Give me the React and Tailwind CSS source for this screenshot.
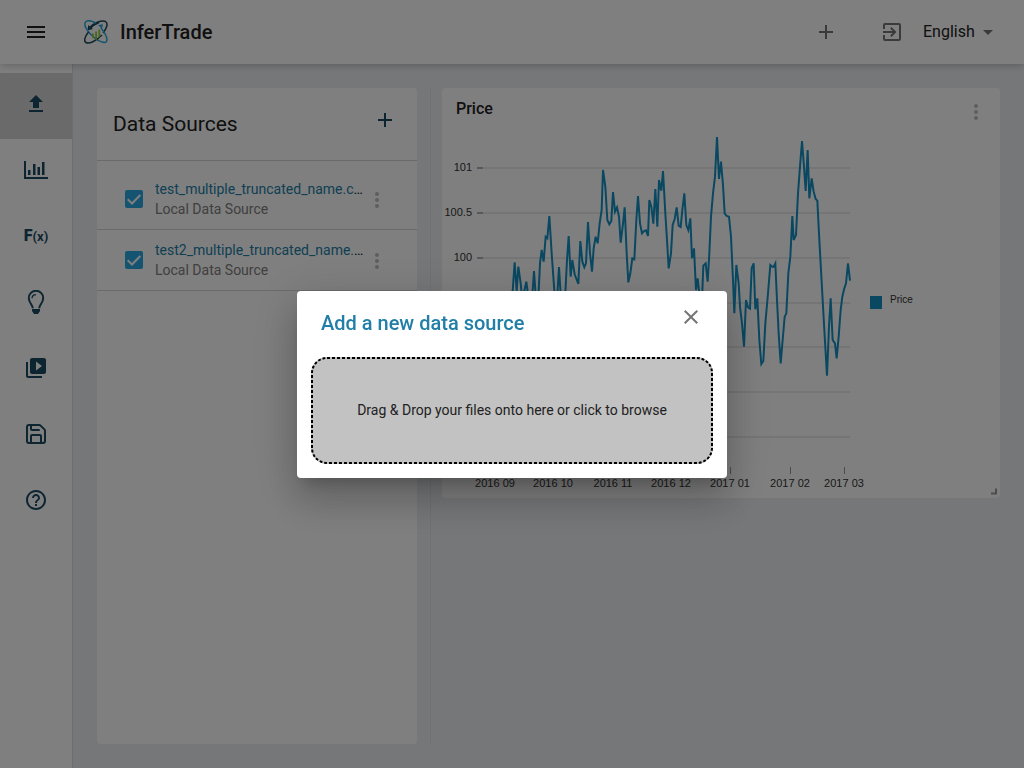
import React from "react";
import {
  MdAdd,
  MdArrowDropDown,
  MdClose,
  MdExitToApp,
  MdFileUpload,
  MdHelpOutline,
  MdMenu,
  MdMoreVert,
  MdVideoLibrary,
} from "react-icons/md";
import { Save } from "lucide-react";

const SOURCES = [
  { id: "source-1", name: "test_multiple_truncated_name.csv", kind: "Local Data Source" },
  { id: "source-2", name: "test2_multiple_truncated_name.csv", kind: "Local Data Source" },
];

const PRICE_LINE =
  "212,560 218,513 224,427 230,513 235,440 242,490 247,540 259,485 266,540 276,540 282,453 288,540 296,513 300,430 305,390 311,425 317,350 322,355 328,288 335,400 340,470 345,540 351,540 357,441 363,540 375,540 381,420 386,348 392,470 397,420 404,463 415,492 421,363 427,425 433,442 438,430 444,306 450,400 456,455 461,385 467,350 473,370 479,310 485,270 489,150 496,200 502,300 508,313 514,303 519,216 525,275 531,262 537,290 542,368 548,320 554,262 560,400 565,487 571,460 577,415 583,418 589,300 594,228 600,310 606,340 612,333 618,331 624,348 628,240 634,260 640,311 646,207 652,320 657,180 664,212 669,153 676,280 681,360 686,445 693,400 698,315 704,297 710,262 716,317 722,321 727,270 733,220 739,315 745,330 751,295 756,415 762,385 768,510 773,475 780,540 786,540 790,437 797,430 803,485 808,400 813,290 819,220 825,170 831,51 837,177 843,125 849,195 854,280 860,288 867,290 873,350 879,480 883,580 889,435 896,490 900,560 906,610 912,680 918,540 924,562 930,566 935,445 941,430 946,568 952,535 958,660 964,732 970,723 976,610 984,520 991,435 997,440 1001,440 1006,430 1011,540 1016,640 1022,730 1028,660 1034,590 1039,580 1045,460 1051,410 1057,288 1061,360 1068,345 1074,220 1080,140 1086,63 1092,140 1097,213 1103,90 1108,235 1115,175 1121,215 1127,237 1132,242 1138,360 1143,450 1148,540 1153,630 1161,767 1167,620 1172,535 1178,660 1185,670 1190,715 1196,650 1202,570 1207,530 1213,505 1218,490 1224,430 1230,482";

const Y_AXIS = [
  { y: 40, label: "101" },
  { y: 85, label: "100.5" },
  { y: 130, label: "100" },
  { y: 175, label: "99.5" },
  { y: 219, label: "99" },
  { y: 264, label: "98.5" },
  { y: 309, label: "98" },
];

const X_AXIS = [
  { x: 53, label: "2016 09" },
  { x: 111, label: "2016 10" },
  { x: 171, label: "2016 11" },
  { x: 229, label: "2016 12" },
  { x: 288, label: "2017 01" },
  { x: 348, label: "2017 02" },
  { x: 402, label: "2017 03" },
];

function Logo() {
  return (
    <svg viewBox="0 0 24 24" className="size-6" fill="none" strokeWidth="1.500" aria-hidden="true">
      <path d="M4 9C9 3 18-.5 21.500 1.500c3 2 1.200 7-2.500 11.500" stroke="#1c4a60" />
      <path d="M15 2.500C11 4 8 6 5.500 9" stroke="#1c4a60" strokeWidth="1.800" />
      <path d="M4 5v5.200l5-1.200z" fill="#1c4a60" />
      <path d="M12 3C7 .5 2.500.2 1.200 2.500-.5 6 4 12.500 10 17.500c5 4 11 6.500 12.600 3.800C24 18.500 21 13 17 8" stroke="#29a9dc" />
      <path d="M14 5l5-.8-1 4.800z" fill="#29a9dc" />
      <path d="M4.500 12C.8 16.500-.3 21 1.800 22.500 5 24.500 12 21 18 15" stroke="#1c4a60" />
      <path d="M8 13.500h1.800v5.200L8 17.200zM11.200 11.500H13v8l-1 .7-.8-.7zM14.400 9.500h1.800v7l-1.800 1.800z" fill="#92c83e" />
    </svg>
  );
}

function IndicatorIcon() {
  return (
    <svg viewBox="0 0 24 24" className="size-6" fill="currentColor" aria-hidden="true">
      <path d="M0 3h2v16h22v2H0zM4 12h2.500v5H4zM9 6h2.500v11H9zM13.500 9H16v8h-2.500zM18 4h2.500v13H18z" />
    </svg>
  );
}

function BulbIcon() {
  return (
    <svg viewBox="0 0 24 24" className="size-6" fill="none" stroke="currentColor" strokeWidth="2" aria-hidden="true">
      <path d="M8.800 18.200C8.800 15 4.800 13 4.800 8a7.200 7.200 0 0 1 14.400 0c0 5-4 7-4 10.200" />
      <path d="M8 8.200A4 4 0 0 1 12 4.600" strokeWidth="1.300" />
      <path d="M8 19h8v2l-2 3h-4l-2-3z" fill="currentColor" stroke="none" />
    </svg>
  );
}

function FunctionIcon() {
  return (
    <span className="flex items-baseline font-bold" aria-hidden="true">
      <span className="text-base leading-6 font-black">F</span>
      <span className="text-[13px] leading-6">(x)</span>
    </span>
  );
}

const NAV = [
  { label: "Upload", icon: <MdFileUpload className="size-6" />, active: true },
  { label: "Indicators", icon: <IndicatorIcon /> },
  { label: "Functions", icon: <FunctionIcon /> },
  { label: "Ideas", icon: <BulbIcon /> },
  { label: "Tutorials", icon: <MdVideoLibrary className="size-6" /> },
  { label: "Save", icon: <Save className="size-6" /> },
  { label: "Help", icon: <MdHelpOutline className="size-6" /> },
];

function Header() {
  return (
    <header className="relative z-10 flex h-16 shrink-0 items-center bg-white pr-6 pl-6 shadow-[0_1px_8px_rgba(0,0,0,0.25)]">
      <button type="button" aria-label="Menu" className="text-[#222]">
        <MdMenu className="size-6" />
      </button>
      <div className="ml-9 flex items-center gap-3">
        <Logo />
        <h1 className="text-xl font-medium">InferTrade</h1>
      </div>
      <div className="ml-auto flex items-center text-[#757575]">
        <button type="button" aria-label="Add">
          <MdAdd className="size-6" />
        </button>
        <button type="button" aria-label="Log in" className="ml-[42px]">
          <MdExitToApp className="size-6" />
        </button>
        <div className="relative ml-[19px] flex items-center">
          <select aria-label="Language" className="w-[77px] appearance-none bg-transparent text-base text-[#212121] outline-none">
            <option>English</option>
          </select>
          <MdArrowDropDown className="pointer-events-none absolute right-0 size-6" />
        </div>
      </div>
    </header>
  );
}

function Sidebar() {
  return (
    <nav className="w-[73px] shrink-0 border-r border-[#d8dadc] bg-white pt-[9px] text-[#1b4b62]">
      {NAV.map((item) => (
        <button
          key={item.label}
          type="button"
          aria-label={item.label}
          className={
            item.active
              ? "flex h-[66px] w-full items-center justify-center bg-[#d4d4d4] pb-1"
              : "flex h-[66px] w-full items-center justify-center pb-1"
          }
        >
          {item.icon}
        </button>
      ))}
    </nav>
  );
}

function SourceRow({ source }) {
  return (
    <li className="flex items-center border-b border-[#d6d6d6] py-2.5 pr-7 pl-7">
      <span className="relative size-[18px] shrink-0">
        <input
          id={source.id}
          type="checkbox"
          defaultChecked
          className="block size-[18px] appearance-none rounded-xs bg-[#29a9e0]"
        />
        <svg viewBox="0 0 18 18" className="pointer-events-none absolute inset-0" fill="none" stroke="white" strokeWidth="2" aria-hidden="true">
          <path d="M2.700 9.300L7 13.500 15.300 5" />
        </svg>
      </span>
      <label htmlFor={source.id} className="ml-3 block min-w-0 flex-1 text-sm">
        <span className="block truncate leading-5">
          <span className="text-[#217fa7]">{source.name}</span>
        </span>
        <span className="block leading-5 text-[#808080]">{source.kind}</span>
      </label>
      <button type="button" aria-label="Source options" className="flex w-6 shrink-0 pt-0.5 text-[#bdbdbd]">
        <MdMoreVert className="size-6 shrink-0" />
      </button>
    </li>
  );
}

function DataSources() {
  return (
    <section className="w-80 shrink-0 rounded bg-white">
      <div className="flex h-[73px] items-start justify-between border-b border-[#d6d6d6] pr-5 pl-4">
        <h2 className="pt-5 text-[21px] leading-8">Data Sources</h2>
        <button type="button" aria-label="Add data source" className="pt-5 text-[#1b4b62]">
          <MdAdd className="size-6" />
        </button>
      </div>
      <ul className="pt-2">
        {SOURCES.map((source) => (
          <SourceRow key={source.id} source={source} />
        ))}
      </ul>
    </section>
  );
}

function PriceChart() {
  return (
    <svg
      viewBox="0 0 558 370"
      className="block w-full font-['Liberation_Sans',sans-serif] text-[11px]"
      role="img"
      aria-label="Price chart"
    >
      {Y_AXIS.map((tick) => (
        <g key={tick.label}>
          <path d={`M41 ${tick.y}H408`} stroke="#ebebeb" strokeWidth="2" />
          <path d={`M35 ${tick.y}h6`} stroke="#b0b0b0" strokeWidth="2" />
          <text x="30" y={tick.y + 3} textAnchor="end" fill="#333">
            {tick.label}
          </text>
        </g>
      ))}
      {X_AXIS.map((tick) => (
        <g key={tick.label}>
          <path d={`M${tick.x + 0.5} 339v7`} stroke="#999" />
          <text x={tick.x} y="359" textAnchor="middle" fill="#333">
            {tick.label}
          </text>
        </g>
      ))}
      <g transform="translate(-2 -8) scale(0.33333)">
        <polyline points={PRICE_LINE} fill="none" stroke="#1491c4" strokeWidth="6" />
      </g>
      <rect x="428" y="168" width="12" height="13" fill="#1491c4" />
      <text x="448" y="175" fill="#333" className="text-[10px]">
        Price
      </text>
      <path d="M554 360.500v5h-5" fill="none" stroke="#999" strokeWidth="2" />
    </svg>
  );
}

function PriceCard() {
  return (
    <section className="rounded bg-white">
      <div className="flex h-10 items-start justify-between pr-3 pl-3.5">
        <h2 className="pt-[9px] text-base leading-6 font-medium">Price</h2>
        <button type="button" aria-label="Chart options" className="pt-3 text-[#bdbdbd]">
          <MdMoreVert className="size-6" />
        </button>
      </div>
      <PriceChart />
    </section>
  );
}

function AddSourceDialog() {
  return (
    <div className="fixed inset-0 z-20 flex items-center justify-center bg-black/50">
      <div
        role="dialog"
        aria-modal="true"
        aria-labelledby="dialog-title"
        className="w-[430px] max-w-full rounded bg-white shadow-[0_11px_15px_-7px_rgba(0,0,0,0.2),0_24px_38px_3px_rgba(0,0,0,0.14),0_9px_46px_8px_rgba(0,0,0,0.12)]"
      >
        <div className="flex h-[66px] items-start justify-between pr-6 pl-6">
          <h2 id="dialog-title" className="pt-4 text-xl leading-8 font-medium text-[#217fa7]">
            Add a new data source
          </h2>
          <button type="button" aria-label="Close" className="pt-3.5 text-[#757575]">
            <MdClose className="size-6" />
          </button>
        </div>
        <div className="px-3.5 pb-3.5">
          <button
            type="button"
            className="relative flex h-[107px] w-full items-center justify-center rounded-2xl bg-[#c2c2c2] p-0.5 text-sm"
          >
            <svg className="pointer-events-none absolute inset-0 size-full overflow-hidden rounded-2xl" aria-hidden="true">
              <rect
                width="100%"
                height="100%"
                rx="16"
                fill="none"
                stroke="black"
                strokeWidth="4"
                strokeDasharray="3 2"
              />
            </svg>
            Drag &amp; Drop your files onto here or click to browse
          </button>
        </div>
      </div>
    </div>
  );
}

export default function App() {
  return (
    <div className="flex min-h-screen flex-col bg-[#ebeff3] font-[Roboto,sans-serif] text-[#212121]">
      <Header />
      <div className="flex flex-1">
        <Sidebar />
        <main className="flex min-w-0 flex-1 p-6">
          <DataSources />
          <div className="ml-3 w-0.5 shrink-0 border-r border-[#dfe3e7]" />
          <div className="ml-[11px] min-w-0 flex-1">
            <PriceCard />
          </div>
        </main>
      </div>
      <AddSourceDialog />
    </div>
  );
}
